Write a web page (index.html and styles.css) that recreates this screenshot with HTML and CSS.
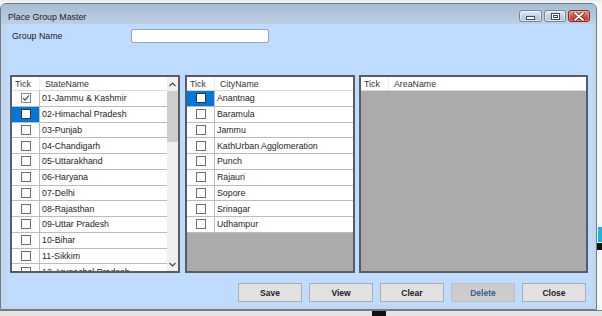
FILE: index.html
```html
<!DOCTYPE html>
<html lang="en">
<head>
<meta charset="UTF-8">
<title>Place Group Master</title>
<link rel="stylesheet" href="styles.css">
</head>
<body>

<div class="desk">
  <div class="window">
    <div class="titlebar">
      <span class="title">Place Group Master</span>
      <div class="caption">
        <span class="cap cap-min"><i class="glyph-min"></i></span>
        <span class="cap cap-max"><i class="glyph-max"></i></span>
        <span class="cap cap-close">
          <svg width="12" height="9" viewBox="0 0 12 9"><path d="M2 1 L10 8 M10 1 L2 8" stroke="#5a1f16" stroke-width="3.2" stroke-linecap="round"/><path d="M2 1 L10 8 M10 1 L2 8" stroke="#fff" stroke-width="1.8" stroke-linecap="round"/></svg>
        </span>
      </div>
    </div>

    <div class="client">
      <div class="group-row">
        <label class="group-label">Group Name</label>
        <input type="text" class="group-input">
      </div>

      <div class="panels">
        <div class="grid grid-state">
          <div class="grid-body">
            <div class="row head"><div class="tick">Tick</div><div class="name">StateName</div></div>
            <div class="row"><div class="tick"><span class="box checked"><svg width="8" height="8" viewBox="0 0 8 8"><path d="M1 4 L3 6.2 L7 1.5" fill="none" stroke="#555" stroke-width="1.2"/></svg></span></div><div class="name">01-Jammu &amp; Kashmir</div></div>
            <div class="row"><div class="tick sel"><span class="box"></span></div><div class="name">02-Himachal Pradesh</div></div>
            <div class="row"><div class="tick"><span class="box"></span></div><div class="name">03-Punjab</div></div>
            <div class="row"><div class="tick"><span class="box"></span></div><div class="name">04-Chandigarh</div></div>
            <div class="row"><div class="tick"><span class="box"></span></div><div class="name">05-Uttarakhand</div></div>
            <div class="row"><div class="tick"><span class="box"></span></div><div class="name">06-Haryana</div></div>
            <div class="row"><div class="tick"><span class="box"></span></div><div class="name">07-Delhi</div></div>
            <div class="row"><div class="tick"><span class="box"></span></div><div class="name">08-Rajasthan</div></div>
            <div class="row"><div class="tick"><span class="box"></span></div><div class="name">09-Uttar Pradesh</div></div>
            <div class="row"><div class="tick"><span class="box"></span></div><div class="name">10-Bihar</div></div>
            <div class="row"><div class="tick"><span class="box"></span></div><div class="name">11-Sikkim</div></div>
            <div class="row"><div class="tick"><span class="box"></span></div><div class="name">12-Arunachal Pradesh</div></div>
          </div>
          <div class="scrollbar">
            <div class="sb-btn"><svg width="7" height="5" viewBox="0 0 7 5"><path d="M0.5 4 L3.5 1 L6.5 4" fill="none" stroke="#444" stroke-width="1.1"/></svg></div>
            <div class="sb-thumb"></div>
            <div class="sb-track"></div>
            <div class="sb-btn"><svg width="7" height="5" viewBox="0 0 7 5"><path d="M0.5 1 L3.5 4 L6.5 1" fill="none" stroke="#444" stroke-width="1.1"/></svg></div>
          </div>
        </div>

        <div class="grid grid-city">
          <div class="grid-body">
            <div class="row head"><div class="tick">Tick</div><div class="name">CityName</div></div>
            <div class="row"><div class="tick sel"><span class="box"></span></div><div class="name">Anantnag</div></div>
            <div class="row"><div class="tick"><span class="box"></span></div><div class="name">Baramula</div></div>
            <div class="row"><div class="tick"><span class="box"></span></div><div class="name">Jammu</div></div>
            <div class="row"><div class="tick"><span class="box"></span></div><div class="name">KathUrban Agglomeration</div></div>
            <div class="row"><div class="tick"><span class="box"></span></div><div class="name">Punch</div></div>
            <div class="row"><div class="tick"><span class="box"></span></div><div class="name">Rajauri</div></div>
            <div class="row"><div class="tick"><span class="box"></span></div><div class="name">Sopore</div></div>
            <div class="row"><div class="tick"><span class="box"></span></div><div class="name">Srinagar</div></div>
            <div class="row"><div class="tick"><span class="box"></span></div><div class="name">Udhampur</div></div>
          </div>
        </div>

        <div class="grid grid-area">
          <div class="grid-body">
            <div class="row head"><div class="tick">Tick</div><div class="name">AreaName</div></div>
          </div>
        </div>
      </div>

      <div class="actions">
        <button class="btn">Save</button>
        <button class="btn">View</button>
        <button class="btn">Clear</button>
        <button class="btn btn-off">Delete</button>
        <button class="btn">Close</button>
      </div>
    </div>
  </div>
  <div class="ground"></div>
</div>

<div class="bit bit-cyan"></div>
<div class="bit bit-black-r"></div>
<div class="bit bit-black-b"></div>

</body>
</html>
```

FILE: styles.css
```css
body {
  margin: 0;
  width: 602px;
  height: 316px;
  overflow: hidden;
  background-color: #f7f7f7;
  font-family: "Liberation Sans", Arial, sans-serif;
  font-size: 8.8px;
  color: #1e1e1e;
  position: relative;
}
.desk {
  padding-top: 3px;
  background: linear-gradient(#e9e9e9, #f7f7f7 3px);
}
.window {
  box-sizing: border-box;
  width: 597px;
  height: 307px;
  border: 1px solid #6b7c8f;
  border-radius: 6px 6px 0 0;
  background-color: #c3d6eb;
  padding: 0 4px 4px 5px;
}
.titlebar {
  height: 20px;
  margin: 0 -4px 0 -5px;
  padding: 0 6px 0 7px;
  display: flex;
  justify-content: space-between;
  border-radius: 5px 5px 0 0;
  background: linear-gradient(#a7bdd4, #bccfe4);
}
.title {
  padding-top: 8px;
  color: #1b1b1b;
}
.caption {
  display: flex;
  padding-top: 6px;
  gap: 2px;
}
.cap {
  box-sizing: border-box;
  width: 22px;
  height: 12px;
  border: 1px solid #6d86a1;
  border-radius: 3px;
  background: linear-gradient(#e4ecf5, #c2d2e3 50%, #aec2d8);
  display: flex;
  align-items: center;
  justify-content: center;
  box-shadow: inset 0 0 0 1px rgba(255, 255, 255, 0.6);
}
.cap-min {
  width: 23px;
}
.cap-close {
  background: linear-gradient(#e69a8c, #cf5a45 50%, #b93a26);
  border-color: #7b2d20;
  box-shadow: inset 0 0 0 1px rgba(255, 200, 190, 0.5);
}
.glyph-min {
  display: block;
  width: 7px;
  height: 2px;
  margin-top: 4px;
  background: #fff;
  border: 1px solid #3d4d5e;
}
.glyph-max {
  display: block;
  box-sizing: border-box;
  width: 9px;
  height: 7px;
  background: #fff;
  border: 1px solid #3d4d5e;
  box-shadow: inset 0 0 0 1px #fff, inset 0 0 0 2px #3d4d5e;
}

.client {
  height: 281px;
  background-color: #bfdbff;
  padding: 5px 0 0 6px;
  box-sizing: border-box;
}
.group-row {
  display: flex;
  align-items: center;
  height: 14px;
}
.group-label {
  width: 119px;
  color: #1b1b1b;
}
.group-input {
  box-sizing: border-box;
  width: 138px;
  height: 14px;
  margin: 0;
  padding: 0;
  border: 1px solid #9aa3ad;
  border-radius: 2px;
  background: #fff;
}

.panels {
  display: flex;
  gap: 5px;
  margin: 32px 0 0 -2px;
  height: 198px;
}
.grid {
  box-sizing: border-box;
  height: 198px;
  border: 2px solid #575d63;
  display: flex;
  background-color: #ababab;
  overflow: hidden;
}
.grid-state {
  width: 170px;
  background-color: #fff;
}
.grid-city {
  width: 170px;
}
.grid-area {
  width: 229px;
  margin-left: -1px;
}
.grid-body {
  flex: 1;
  overflow: hidden;
}
.row {
  display: flex;
  box-sizing: border-box;
  height: 15.75px;
  border-bottom: 1px solid #bcbcbc;
  background-color: #fff;
}
.row.head {
  height: 14px;
  border-bottom-color: #d9d9d9;
  color: #333;
}
.tick {
  box-sizing: border-box;
  width: 28px;
  flex: none;
  border-right: 1px solid #bcbcbc;
  display: flex;
  align-items: center;
  justify-content: center;
}
.head .tick {
  justify-content: flex-start;
  padding-left: 3px;
  border-right-color: #ececec;
}
.name {
  flex: 1;
  padding-left: 2px;
  display: flex;
  align-items: center;
  white-space: nowrap;
}
.head .name {
  padding-left: 5px;
}
.tick.sel {
  background-color: #0078d7;
}
.box {
  box-sizing: border-box;
  width: 10px;
  height: 10px;
  border: 1px solid #6f6f6f;
  background: #fff;
  display: flex;
  align-items: center;
  justify-content: center;
}
.sel .box {
  border-color: #333;
}
.box.checked {
  border-color: #8a8a8a;
}

.scrollbar {
  width: 11px;
  flex: none;
  display: flex;
  flex-direction: column;
  background-color: #f0f0f0;
}
.sb-btn {
  height: 14px;
  display: flex;
  align-items: center;
  justify-content: center;
}
.sb-thumb {
  height: 51px;
  background-color: #cdcdcd;
}
.sb-track {
  flex: 1;
}

.actions {
  display: flex;
  gap: 7px;
  margin-top: 10px;
  padding-left: 226px;
}
.btn {
  box-sizing: border-box;
  width: 64px;
  height: 19px;
  margin: 0;
  padding: 0;
  border: 1px solid #adadad;
  background-color: #e1e1e1;
  font-family: "Liberation Sans", Arial, sans-serif;
  font-size: 8.5px;
  font-weight: bold;
  color: #222;
}
.btn-off {
  background-color: #cccccc;
  border-color: #bfbfbf;
  color: #3c5c96;
}

.ground {
  height: 6px;
  border-top: 1px solid #7a7a7a;
  background-color: #e4e4e4;
}
.bit {
  position: absolute;
}
.bit-cyan {
  left: 598px;
  top: 227px;
  width: 4px;
  height: 15px;
  background-color: #19b4e6;
}
.bit-black-r {
  left: 597px;
  top: 243px;
  width: 5px;
  height: 7px;
  background-color: #111;
}
.bit-black-b {
  left: 372px;
  top: 311px;
  width: 14px;
  height: 5px;
  background-color: #111;
}
```
